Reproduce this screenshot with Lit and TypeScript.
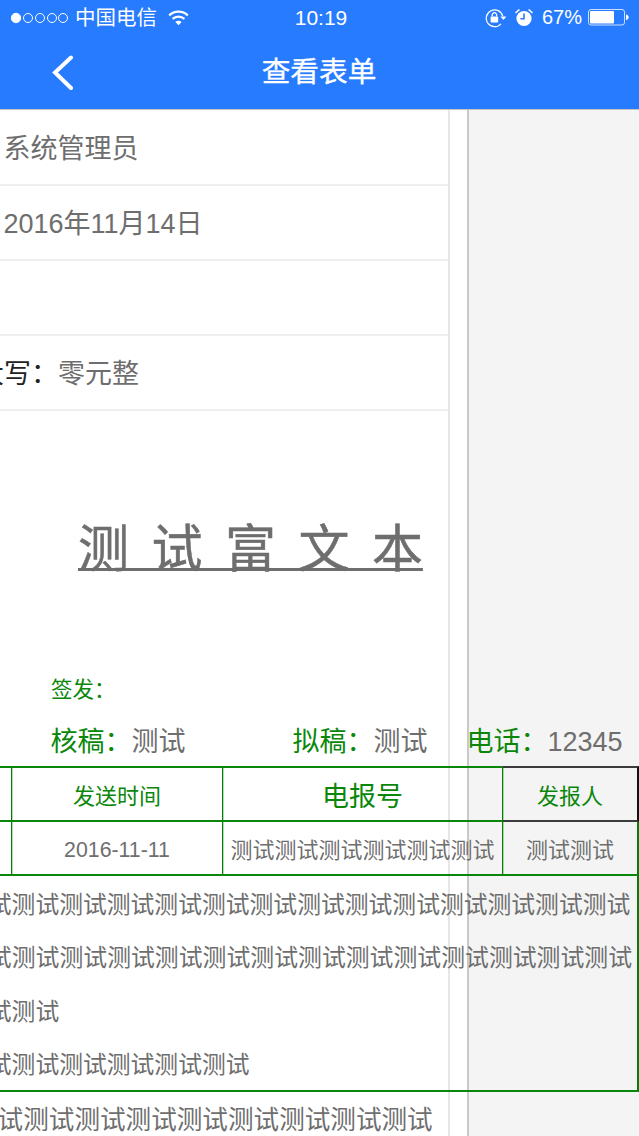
import { LitElement, html, css } from "lit";
import { customElement } from "lit/decorators.js";

const pair = (n: number) => "测试".repeat(n);

@customElement("app-root")
export class AppRoot extends LitElement {
  static styles = css`
    :host {
      display: block;
      height: 1136px;
      overflow: hidden;
      font-family: "Liberation Sans", "Noto Sans CJK SC", sans-serif;
      color: #6e6e6e;
    }
    .header {
      height: 109px;
      background: #277bff;
      border-bottom: 1px solid #c4c4c4;
      color: #fff;
    }
    .status {
      height: 35px;
      display: grid;
      grid-template-columns: 1fr auto 1fr;
      align-items: center;
      padding: 0 10px 0 11px;
    }
    .status-left {
      display: flex;
      align-items: center;
    }
    .carrier {
      font-size: 20.5px;
      margin-left: 6px;
      line-height: 35px;
    }
    .wifi {
      margin-left: 11px;
    }
    .time {
      font-size: 21px;
      line-height: 35px;
      margin-left: 2px;
    }
    .status-right {
      display: flex;
      align-items: center;
      justify-content: flex-end;
    }
    .pct {
      font-size: 20px;
      line-height: 35px;
      margin: 0 6px 0 8px;
    }
    .alarm {
      margin-left: 8px;
    }
    svg {
      display: block;
      flex: none;
    }
    .nav {
      height: 74px;
      display: grid;
      grid-template-columns: 1fr auto 1fr;
      align-items: center;
    }
    .back {
      padding-left: 51px;
    }
    .title {
      font-size: 28.7px;
      line-height: 74px;
      margin-right: 1px;
      -webkit-text-stroke: 0.3px #fff;
    }
    .body {
      height: 1026px;
      overflow: hidden;
      padding-top: 1px;
      box-sizing: border-box;
      background: linear-gradient(
        to right,
        #fff 448px,
        #e6e6e6 448px,
        #e6e6e6 450px,
        #fff 450px,
        #fff 467px,
        #c9c9c9 467px,
        #c9c9c9 469px,
        #f4f4f4 469px
      );
    }
    .sheet {
      width: 679px;
      margin-left: -40px;
    }
    .row {
      width: 488px;
      height: 75px;
      box-sizing: border-box;
      border-bottom: 2px solid #efefef;
      font-size: 27px;
      line-height: 77px;
      padding-left: 43.5px;
      white-space: nowrap;
    }
    .clip {
      padding-left: 17px;
    }
    .label {
      color: #222;
    }
    .rich {
      width: 488px;
      box-sizing: border-box;
      padding: 103px 0 0 118px;
      height: 264px;
      font-size: 51px;
      line-height: 72px;
      word-spacing: 8.3px;
      white-space: nowrap;
      -webkit-text-stroke: 0.5px #6e6e6e;
    }
    .rich span {
      text-decoration: underline;
      text-decoration-thickness: 3px;
      text-underline-offset: 1px;
    }
    .sign {
      padding-left: 91px;
      font-size: 21.5px;
      line-height: 30px;
      height: 47px;
      color: #0a870a;
    }
    .names {
      display: grid;
      grid-template-columns: 242px 174px auto;
      padding-left: 90.5px;
      font-size: 27px;
      line-height: 40px;
      height: 40px;
      margin-bottom: 4px;
      white-space: nowrap;
    }
    .g {
      color: #0a870a;
    }
    .table {
      display: grid;
      grid-template-columns: 52px 211px 280px 136px;
      grid-template-rows: 56px 54px 216px auto;
      white-space: nowrap;
    }
    .cell {
      box-sizing: border-box;
      border-right: 1px solid #067d06;
      border-bottom: 2px solid #0a870a;
      box-shadow: 1px 0 0 rgba(10, 135, 10, 0.3);
      display: flex;
      align-items: center;
      justify-content: center;
      font-size: 22px;
      overflow: hidden;
    }
    .top {
      border-top: 2px solid #0a870a;
      color: #0a870a;
    }
    .big {
      font-size: 27px;
    }
    .date {
      font-size: 21.3px;
      padding-top: 5px;
    }
    .end {
      border-right-width: 2px;
      box-shadow: none;
    }
    .sender {
      border-top-color: #3c3c3c;
      border-bottom-color: #3c3c3c;
      border-right-color: #111;
    }
    .wide {
      grid-column: 1 / -1;
      display: block;
      padding: 2px 0 0 4px;
      font-size: 23.8px;
      line-height: 53.4px;
    }
    .wide .w2 {
      font-size: 23.86px;
    }
    .last {
      grid-column: 1 / -1;
      padding: 13px 0 0 12px;
      font-size: 25.6px;
      line-height: 30px;
    }
  `;

  render() {
    return html`
      <div class="header">
        <div class="status">
          <div class="status-left">
            <svg width="58" height="12" viewBox="0 0 58 12" fill="none" stroke="#fff" stroke-width="1">
              <circle cx="5" cy="6" r="4.7" fill="#fff" />
              <circle cx="17" cy="6" r="4.5" />
              <circle cx="29" cy="6" r="4.5" />
              <circle cx="41" cy="6" r="4.5" />
              <circle cx="52" cy="6" r="4.5" />
            </svg>
            <span class="carrier">中国电信</span>
            <svg class="wifi" width="21" height="16" viewBox="0 0 21 16" fill="none" stroke="#fff" stroke-width="2.2">
              <path d="M1.2 5.4a13.4 13.4 0 0 1 18.6 0" />
              <path d="M4.6 8.9a8.600 8.600 0 0 1 11.8 0" />
              <path d="M10.5 15.2 7.4 12a4.3 4.3 0 0 1 6.2 0z" fill="#fff" stroke="none" />
            </svg>
          </div>
          <div class="time">10:19</div>
          <div class="status-right">
            <svg width="21" height="20" viewBox="0 0 21 20" fill="none" stroke="#fff" stroke-width="1.2">
              <path d="M17.8 8.2A8.4 8.4 0 1 0 16 15.8" />
              <path d="M15.4 8.600h6l-3 3.4z" fill="#fff" stroke="none" />
              <rect x="5.6" y="8.6" width="7.6" height="6" rx="0.8" fill="#fff" stroke="none" />
              <path d="M7.2 8.6V6.9a2.2 2.2 0 0 1 4.4 0v1.7" stroke-width="1.3" />
            </svg>
            <svg class="alarm" width="20" height="19" viewBox="0 0 20 19" fill="#fff">
              <circle cx="10" cy="10.5" r="7.6" />
              <path d="M1 4.4 4.800 1 6 2 2 5.600zM19 4.400 15.200 1 14 2 18 5.600z" />
              <path d="M10 5.600v5.200H6.400" fill="none" stroke="#277bff" stroke-width="1.6" />
            </svg>
            <span class="pct">67%</span>
            <svg width="41" height="17" viewBox="0 0 41 17" fill="none">
              <rect x="0.5" y="0.5" width="36" height="15.5" rx="2.5" stroke="#cfe0ff" />
              <rect x="2" y="2" width="24" height="12.5" rx="1" fill="#fff" />
              <path d="M38 5.500c1.600.3 2.600 1.300 2.600 2.800S39.600 10.800 38 11z" fill="#fff" />
            </svg>
          </div>
        </div>
        <div class="nav">
          <div class="back">
            <svg width="24" height="36" viewBox="0 0 24 36" fill="none" stroke="#fff" stroke-width="4" stroke-linecap="round" stroke-linejoin="miter">
              <path d="M20 3.500 4 18.500 20 34" />
            </svg>
          </div>
          <div class="title">查看表单</div>
          <div></div>
        </div>
      </div>
      <div class="body">
        <div class="sheet">
          <div class="row">系统管理员</div>
          <div class="row">2016年11月14日</div>
          <div class="row"></div>
          <div class="row clip"><span class="label">大写：</span>零元整</div>
          <div class="rich"><span>测 试 富 文 本</span></div>
          <div class="sign">签发：</div>
          <div class="names">
            <div><span class="g">核稿：</span>测试</div>
            <div><span class="g">拟稿：</span>测试</div>
            <div><span class="g">电话：</span>12345</div>
          </div>
          <div class="table">
            <div class="cell top"></div>
            <div class="cell top">发送时间</div>
            <div class="cell top big">电报号</div>
            <div class="cell top end sender">发报人</div>
            <div class="cell"></div>
            <div class="cell date">2016-11-11</div>
            <div class="cell">${pair(6)}</div>
            <div class="cell end">${pair(2)}</div>
            <div class="cell end wide">
              <div>${pair(14)}</div>
              <div class="w2">${pair(14)}</div>
              <div>${pair(2)}</div>
              <div>${pair(6)}</div>
            </div>
            <div class="last">${pair(9)}</div>
          </div>
        </div>
      </div>
    `;
  }
}
